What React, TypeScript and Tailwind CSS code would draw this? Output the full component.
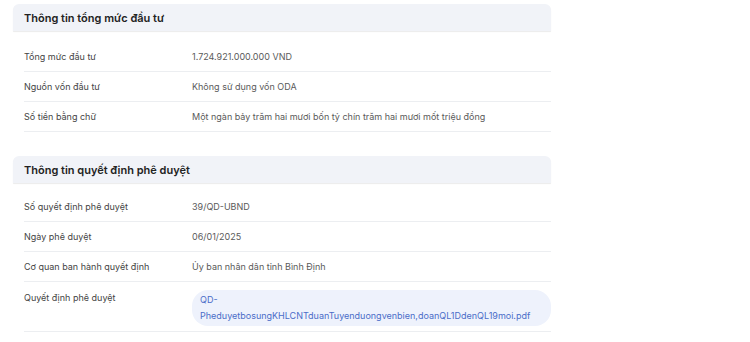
import React from 'react';

interface Row {
  label: string;
  value: string;
}

const investRows: Row[] = [
  { label: 'Tổng mức đầu tư', value: '1.724.921.000.000 VND' },
  { label: 'Nguồn vốn đầu tư', value: 'Không sử dụng vốn ODA' },
  { label: 'Số tiền bằng chữ', value: 'Một ngàn bảy trăm hai mươi bốn tỷ chín trăm hai mươi mốt triệu đồng' },
];

const decisionRows: Row[] = [
  { label: 'Số quyết định phê duyệt', value: '39/QD-UBND' },
  { label: 'Ngày phê duyệt', value: '06/01/2025' },
  { label: 'Cơ quan ban hành quyết định', value: 'Ủy ban nhân dân tỉnh Bình Định' },
];

const SectionHeader: React.FC<{ title: string }> = ({ title }) => (
  <div className="flex h-[27px] items-center rounded-t-[6px] bg-[#f1f3f8] px-[11px] shadow-[0_1px_1px_rgba(0,0,0,0.08)]">
    <span className="text-[11px] font-semibold text-[#222]">{title}</span>
  </div>
);

const InfoRow: React.FC<Row> = ({ label, value }) => (
  <div className="ml-[11px] flex h-[30px] items-center border-b border-[#eceef1]">
    <div className="w-[168px] shrink-0 text-[#444]">{label}</div>
    <div className="text-[#5a5a5a]">{value}</div>
  </div>
);

export default function App() {
  return (
    <div className="h-[342px] w-[750px] bg-white pl-[13px] pt-[4px] text-[9px] font-['Inter',sans-serif] leading-[14px]">
      <div className="w-[538px]">
        <SectionHeader title="Thông tin tổng mức đầu tư" />
        <div className="mt-[11px]">
          {investRows.map((r) => (
            <InfoRow key={r.label} {...r} />
          ))}
        </div>

        <div className="mt-[24px]">
          <SectionHeader title="Thông tin quyết định phê duyệt" />
        </div>
        <div className="mt-[9px]">
          {decisionRows.map((r) => (
            <InfoRow key={r.label} {...r} />
          ))}
          {/* file attachment */}
          <div className="ml-[11px] flex h-[50px] items-start border-b border-[#eceef1] pt-[8px]">
            <div className="w-[168px] shrink-0 pt-[1px] text-[#444]">Quyết định phê duyệt</div>
            <div className="min-w-0 flex-1 rounded-[16px] bg-[#eef2fc] px-[8px] py-[2px] leading-[16px] text-[#4a6dc8] break-words">
              QD-
              <br />
              PheduyetbosungKHLCNTduanTuyenduongvenbien,doanQL1DdenQL19moi.pdf
            </div>
          </div>
        </div>
      </div>
    </div>
  );
}
